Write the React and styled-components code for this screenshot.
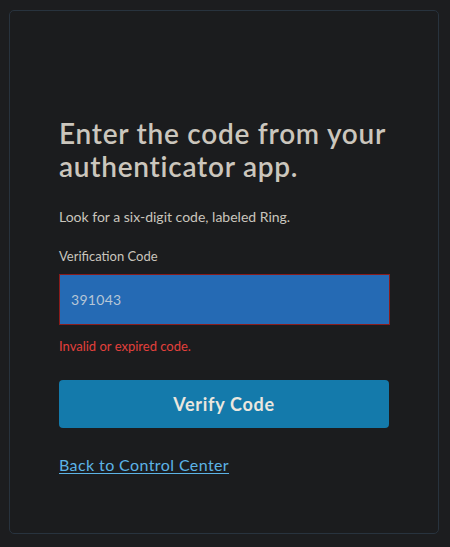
import React from 'react';
import styled, { createGlobalStyle } from 'styled-components';

const GlobalStyle = createGlobalStyle`
  html, body {
    margin: 0;
    padding: 0;
    background: #1c1d1f;
  }
  body {
    font-family: Lato, "Open Sans", sans-serif;
  }
`;

const Page = styled.div`
  box-sizing: border-box;
  width: 450px;
  height: 547px;
  padding: 10px 11px 13px 9px;
`;

const Card = styled.div`
  box-sizing: border-box;
  height: 100%;
  border: 1px solid #28333e;
  border-radius: 5px;
  background: #1b1c1e;
  padding: 106px 49px 0 49px;
  display: flex;
  flex-direction: column;
`;

const Heading = styled.h1`
  margin: 0;
  font-size: 28px;
  line-height: 33px;
  font-weight: 600;
  color: #cbc6bd;
  letter-spacing: 0.75px;
`;

const Hint = styled.p`
  margin: 25px 0 0;
  font-size: 14px;
  line-height: 18px;
  color: #c9c5bd;
`;

const Label = styled.label`
  margin-top: 22px;
  font-size: 13px;
  line-height: 16px;
  color: #c9c5bd;
`;

const CodeInput = styled.input`
  box-sizing: border-box;
  margin-top: 10px;
  width: 331px;
  height: 51px;
  padding: 0 11px;
  border: 1px solid ${p => (p.$invalid ? '#8a1c1c' : '#2b3a48')};
  background: #256ab4;
  color: #b6c6d6;
  font-family: Lato, "Open Sans", sans-serif;
  font-size: 14px;
  letter-spacing: 0.3px;
  outline: none;
`;

const ErrorText = styled.div`
  margin-top: 13px;
  font-size: 13px;
  line-height: 16px;
  color: #e2403c;
`;

const VerifyButton = styled.button`
  margin-top: 26px;
  width: 330px;
  height: 48px;
  border: none;
  border-radius: 4px;
  background: #147aab;
  color: #ebe7df;
  font-family: Lato, "Open Sans", sans-serif;
  font-size: 18px;
  font-weight: 700;
  letter-spacing: 0.7px;
  cursor: pointer;
`;

const BackLink = styled.a`
  margin-top: 27px;
  align-self: flex-start;
  font-size: 16px;
  line-height: 20px;
  color: #5cb3e6;
  letter-spacing: 0.4px;
  text-decoration: underline;
  text-underline-offset: 2px;
`;

export default function App() {
  return (
    <Page>
      <GlobalStyle />
      <Card>
        <Heading>Enter the code from your authenticator app.</Heading>
        <Hint>Look for a six-digit code, labeled Ring.</Hint>
        <Label htmlFor="code">Verification Code</Label>
        <CodeInput id="code" $invalid defaultValue="391043" />
        <ErrorText>Invalid or expired code.</ErrorText>
        <VerifyButton>Verify Code</VerifyButton>
        <BackLink href="#">Back to Control Center</BackLink>
      </Card>
    </Page>
  );
}
